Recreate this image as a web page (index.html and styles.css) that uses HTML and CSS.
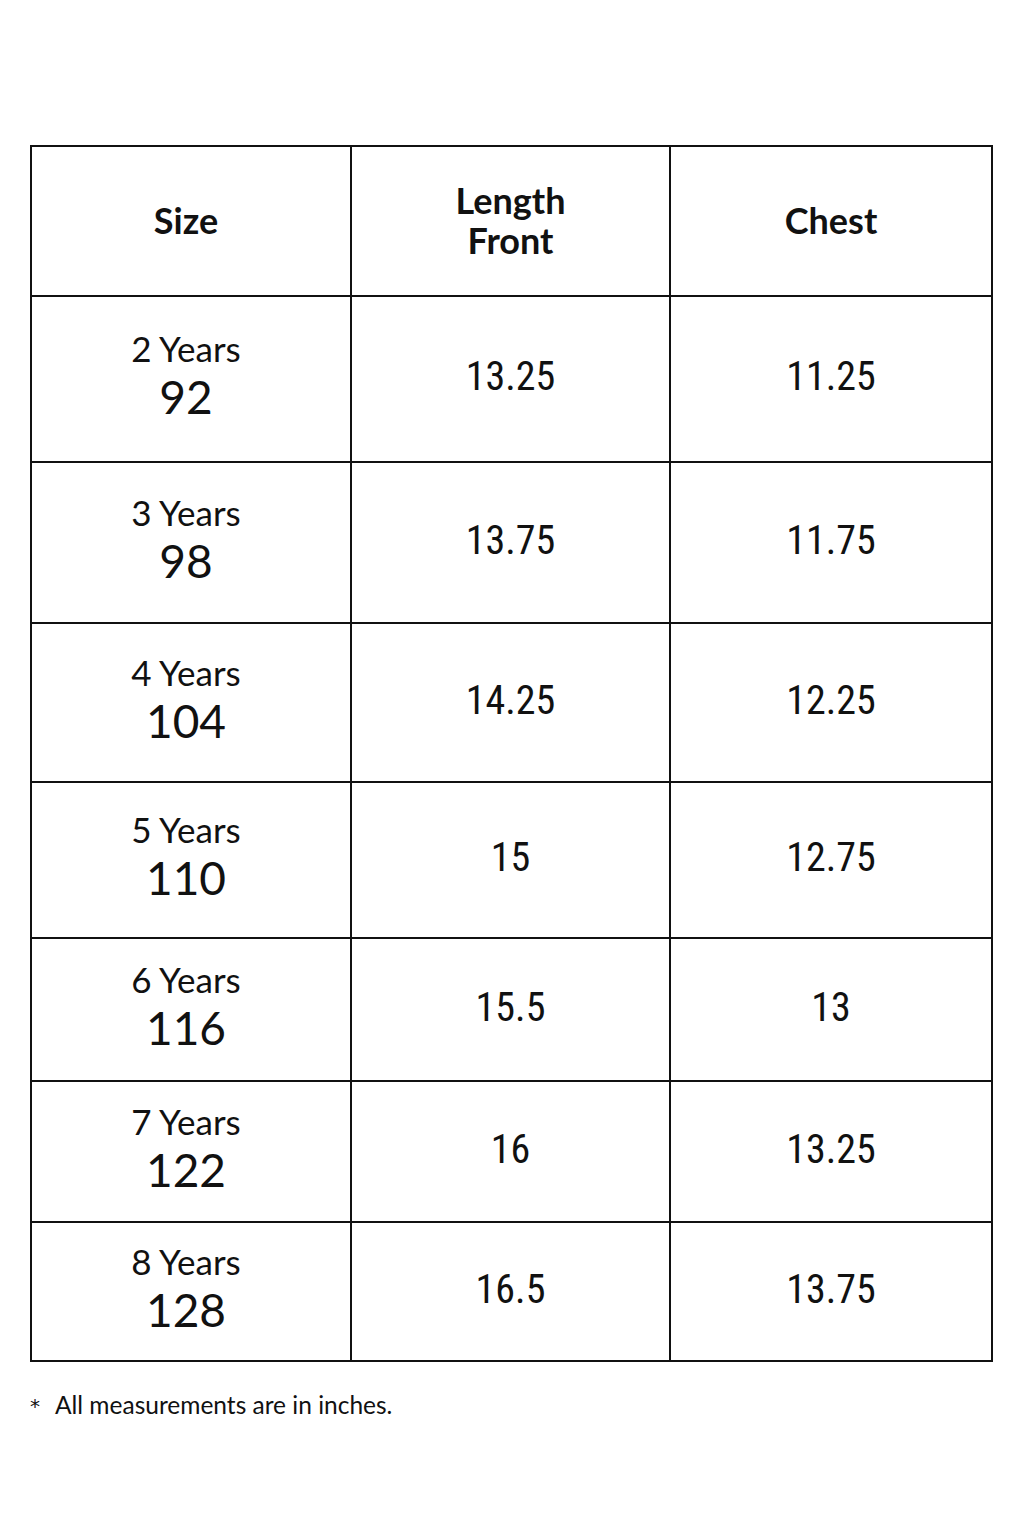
FILE: index.html
```html
<!DOCTYPE html>
<html lang="en">
<head>
<meta charset="utf-8">
<title>Size chart</title>
<link rel="stylesheet" href="styles.css">
</head>
<body>
<main class="page">
  <div class="chart">
    <div class="cell head first">Size</div>
    <div class="cell head">Length<br>Front</div>
    <div class="cell head">Chest</div>

    <div class="cell size first"><span class="age">2 Years</span><span class="num">92</span></div>
    <div class="cell val">13.25</div>
    <div class="cell val">11.25</div>

    <div class="cell size first"><span class="age">3 Years</span><span class="num">98</span></div>
    <div class="cell val">13.75</div>
    <div class="cell val">11.75</div>

    <div class="cell size first"><span class="age">4 Years</span><span class="num">104</span></div>
    <div class="cell val">14.25</div>
    <div class="cell val">12.25</div>

    <div class="cell size first"><span class="age">5 Years</span><span class="num">110</span></div>
    <div class="cell val">15</div>
    <div class="cell val">12.75</div>

    <div class="cell size first"><span class="age">6 Years</span><span class="num">116</span></div>
    <div class="cell val">15.5</div>
    <div class="cell val">13</div>

    <div class="cell size first"><span class="age">7 Years</span><span class="num">122</span></div>
    <div class="cell val">16</div>
    <div class="cell val">13.25</div>

    <div class="cell size first"><span class="age">8 Years</span><span class="num">128</span></div>
    <div class="cell val">16.5</div>
    <div class="cell val">13.75</div>
  </div>
  <p class="note"><span class="star">*</span><span class="note-text">All measurements are in inches.</span></p>
</main>
</body>
</html>
```
FILE: styles.css
```css
html, body {
  margin: 0;
  padding: 0;
  background: #fff;
}

body {
  font-family: Lato, "Open Sans", sans-serif;
  color: #111;
}

.page {
  padding: 145px 30px 0 30px;
  width: 963px;
}

.chart {
  display: grid;
  grid-template-columns: 320px 319px 1fr;
  grid-template-rows: 150px 166px 161px 159px 156px 143px 141px 139px;
  border-top: 2px solid #111;
  border-left: 2px solid #111;
  width: 963px;
  box-sizing: border-box;
}

.cell {
  box-sizing: border-box;
  border-right: 2px solid #111;
  border-bottom: 2px solid #111;
  display: flex;
  flex-direction: column;
  align-items: center;
  justify-content: center;
  text-align: center;
}

.first {
  padding-right: 10px;
}

.head {
  font-family: Lato, sans-serif;
  font-weight: 700;
  font-size: 36px;
  line-height: 40px;
  padding-bottom: 2px;
}

.size {
  padding-bottom: 8px;
}

.age {
  font-family: Lato, sans-serif;
  font-size: 35px;
  line-height: 44px;
}

.num {
  font-family: Lato, sans-serif;
  font-size: 46px;
  line-height: 54px;
}

.val {
  font-family: Roboto, sans-serif;
  font-stretch: 78%;
  font-weight: 380;
  font-size: 40px;
  line-height: 48px;
  padding-bottom: 4px;
}

.note {
  margin: 28px 0 0 0;
  font-family: Lato, sans-serif;
  font-size: 24.5px;
  line-height: 30px;
  display: flex;
  align-items: center;
}

.star {
  width: 25px;
  font-family: "DejaVu Sans", sans-serif;
  font-size: 20px;
  line-height: 20px;
  padding-top: 2px;
}
```
